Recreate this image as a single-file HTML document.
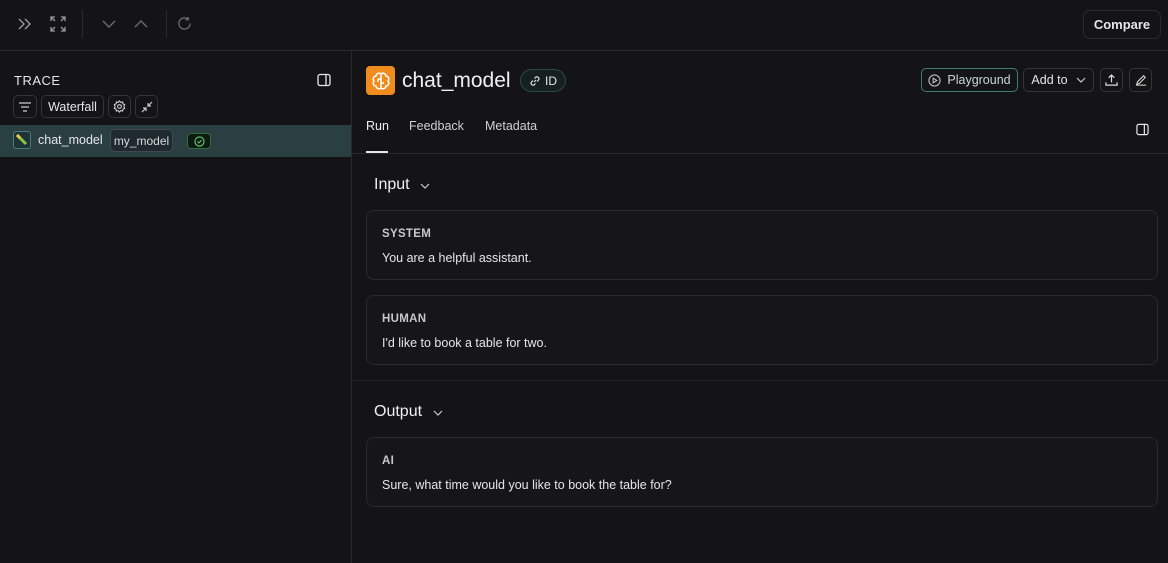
<!DOCTYPE html>
<html><head><style>
*{box-sizing:border-box;margin:0;padding:0}
body{width:1168px;height:563px;background:#141416;font-family:"Liberation Sans",sans-serif;color:#e6e6e8;position:relative;overflow:hidden;font-size:13px}
.abs{position:absolute}
.btn{position:absolute;border:1px solid #34343a;border-radius:5px;display:flex;align-items:center;justify-content:center;color:#e6e6e8}
svg{display:block}
.card{position:absolute;left:366px;width:792px;border:1px solid #2a2a2f;border-radius:8px;background:#161619}
.lbl{position:absolute;left:15px;font-size:11.5px;font-weight:bold;color:#c8c8cc;letter-spacing:.3px}
.txt{position:absolute;left:15px;font-size:12.5px;color:#e6e6e8}
</style></head><body>
<div class="abs" style="left:0;top:50px;width:1168px;height:1px;background:#2a2a2e"></div>
<svg class="abs" style="left:17px;top:16px" width="16" height="16" viewBox="0 0 16 16" fill="none" stroke="#9a9aa0" stroke-width="1.4"><path d="M2 3l5 5-5 5M8 3l5 5-5 5"/></svg>
<svg class="abs" style="left:50px;top:16px" width="16" height="16" viewBox="0 0 16 16" fill="none" stroke="#9a9aa0" stroke-width="1.3"><path d="M1 5V1h4M1 1l4 4M11 1h4v4M15 1l-4 4M1 11v4h4M1 15l4-4M15 11v4h-4M15 15l-4-4"/></svg>
<div class="abs" style="left:82px;top:10px;width:1px;height:28px;background:#2a2a2e"></div>
<svg class="abs" style="left:101px;top:16px" width="16" height="16" viewBox="0 0 16 16" fill="none" stroke="#6a6a70" stroke-width="1.4"><path d="M2 5l6 6 6-6"/></svg>
<svg class="abs" style="left:133px;top:16px" width="16" height="16" viewBox="0 0 16 16" fill="none" stroke="#6a6a70" stroke-width="1.4"><path d="M2 11l6-6 6 6"/></svg>
<div class="abs" style="left:166px;top:10px;width:1px;height:28px;background:#2a2a2e"></div>
<svg class="abs" style="left:177px;top:16px" width="15" height="15" viewBox="0 0 16 16" fill="none" stroke="#6a6a70" stroke-width="1.4"><path d="M14 8a6 6 0 1 1-2-4.5M12 1v3h-3"/></svg>
<div class="btn" style="left:1083px;top:10px;width:78px;height:29px;border-radius:7px;font-weight:bold;font-size:13px;border-color:#2a2a2f">Compare</div>
<div class="abs" style="left:351px;top:51px;width:1px;height:512px;background:#2a2a2e"></div>
<div class="abs" style="left:14px;top:73px;font-size:13px;letter-spacing:.5px">TRACE</div>
<svg class="abs" style="left:317px;top:73px" width="14" height="14" viewBox="0 0 14 14" fill="none" stroke="#e6e6e8" stroke-width="1.3"><rect x="1" y="1.5" width="12" height="11" rx="2"/><path d="M9 1.5v11"/></svg>
<div class="btn" style="left:13px;top:95px;width:24px;height:23px"><svg width="12" height="10" viewBox="0 0 12 10" stroke="#ccc" stroke-width="1.2"><path d="M0 1h12M2 5h8M4 9h4"/></svg></div>
<div class="btn" style="left:41px;top:95px;width:63px;height:23px;font-size:12.5px">Waterfall</div>
<div class="btn" style="left:108px;top:95px;width:23px;height:23px"><svg width="13" height="13" viewBox="0 0 14 14" fill="none" stroke="#ccc" stroke-width="1.2"><circle cx="7" cy="7" r="2"/><path d="M7 1l1.3 1.6 2-.5.4 2 1.9.9-.9 2 .9 2-1.9.9-.4 2-2-.5L7 13l-1.3-1.6-2 .5-.4-2-1.9-.9.9-2-.9-2 1.9-.9.4-2 2 .5z"/></svg></div>
<div class="btn" style="left:135px;top:95px;width:23px;height:23px"><svg width="12" height="12" viewBox="0 0 12 12" fill="none" stroke="#ccc" stroke-width="1.2"><path d="M1 11l4-4M2 7h3v3M11 1L7 5M7 2v3h3"/></svg></div>
<div class="abs" style="left:0;top:125px;width:351px;height:32px;background:#2a3f42"></div>
<div class="abs" style="left:13px;top:131px;width:18px;height:18px;border:1px solid #4a7a78;border-radius:3px;background:#1e3336"><svg width="16" height="16" viewBox="0 0 16 16"><path d="M3 3l9 9" stroke="#8bc34a" stroke-width="3"/><path d="M3 3l3 3" stroke="#f2c744" stroke-width="3"/></svg></div>
<div class="abs" style="left:38px;top:133px;font-size:12.5px">chat_model</div>
<div class="abs" style="left:110px;top:129px;width:63px;height:23px;border:1px solid #44484c;border-radius:5px;background:#1e2a2d;font-size:12px;color:#d8d8dc;display:flex;align-items:center;justify-content:center">my_model</div>
<div class="abs" style="left:187px;top:133px;width:24px;height:16px;border:1px solid #2f6e3c;border-radius:4px;background:#0f1a12;display:flex;align-items:center;justify-content:center"><svg width="11" height="11" viewBox="0 0 12 12" fill="none" stroke="#5fcf7a" stroke-width="1.2"><circle cx="6" cy="6" r="5"/><path d="M3.8 6l1.5 1.5L8.3 4.6"/></svg></div>
<div class="abs" style="left:366px;top:66px;width:29px;height:29px;background:#f08c1e;border-radius:4px;display:flex;align-items:center;justify-content:center"><svg width="20" height="20" viewBox="0 0 20 20" fill="none" stroke="#fff" stroke-width="1.5"><path d="M10 3a3 3 0 0 0-5 2 3 3 0 0 0-2 5 3 3 0 0 0 2 5 3 3 0 0 0 5 2 3 3 0 0 0 5-2 3 3 0 0 0 2-5 3 3 0 0 0-2-5 3 3 0 0 0-5-2zM10 3v14M7 8h3M10 12h3M7 8v3"/></svg></div>
<div class="abs" style="left:402px;top:69px;font-size:21px;color:#f0f0f2">chat_model</div>
<div class="abs" style="left:520px;top:69px;width:46px;height:23px;border:1px solid #2a4a4a;border-radius:12px;background:#15201f;display:flex;align-items:center;justify-content:center;gap:4px;font-size:12px"><svg width="12" height="12" viewBox="0 0 12 12" fill="none" stroke="#ddd" stroke-width="1.2"><path d="M5 7l2-2M4 5.5L2.5 7a2 2 0 0 0 2.8 2.8L6.5 8.5M8 6.5L9.5 5a2 2 0 0 0-2.8-2.8L5.5 3.5"/></svg>ID</div>
<div class="btn" style="left:921px;top:68px;width:97px;height:24px;border-color:#3f7a76;font-size:12.5px;color:#c8d8d6;gap:6px"><svg width="13" height="13" viewBox="0 0 14 14" fill="none" stroke="#bbb" stroke-width="1.2"><circle cx="7" cy="7" r="6"/><path d="M5.5 4.5v5l4-2.5z"/></svg>Playground</div>
<div class="btn" style="left:1023px;top:68px;width:71px;height:24px;font-size:12.5px;gap:8px">Add to<svg width="10" height="6" viewBox="0 0 10 6" fill="none" stroke="#ccc" stroke-width="1.2"><path d="M1 1l4 4 4-4"/></svg></div>
<div class="btn" style="left:1100px;top:68px;width:23px;height:24px"><svg width="13" height="13" viewBox="0 0 14 14" fill="none" stroke="#ddd" stroke-width="1.3"><path d="M7 9V1M4 4l3-3 3 3M1 9v3h12V9"/></svg></div>
<div class="btn" style="left:1129px;top:68px;width:23px;height:24px"><svg width="12" height="12" viewBox="0 0 14 14" fill="none" stroke="#ddd" stroke-width="1.2"><path d="M2 12l1-3 7-7 2 2-7 7zM1 13h12"/></svg></div>
<div class="abs" style="left:366px;top:119px;font-size:12.5px;color:#f0f0f2">Run</div>
<div class="abs" style="left:409px;top:119px;font-size:12.5px;color:#d0d0d4">Feedback</div>
<div class="abs" style="left:485px;top:119px;font-size:12.5px;color:#d0d0d4">Metadata</div>
<svg class="abs" style="left:1136px;top:123px" width="13" height="13" viewBox="0 0 14 14" fill="none" stroke="#e6e6e8" stroke-width="1.3"><rect x="1" y="1.5" width="12" height="11" rx="2"/><path d="M9 1.5v11"/></svg>
<div class="abs" style="left:352px;top:153px;width:816px;height:1px;background:#2a2a2e"></div>
<div class="abs" style="left:366px;top:151px;width:22px;height:2px;background:#e6e6e8"></div>
<div class="abs" style="left:374px;top:176px;font-size:16px;color:#f0f0f2">Input</div>
<svg class="abs" style="left:420px;top:183px" width="10" height="6" viewBox="0 0 10 6" fill="none" stroke="#ccc" stroke-width="1.2"><path d="M1 1l4 4 4-4"/></svg>
<div class="card" style="top:210px;height:70px"><div class="lbl" style="top:17px">SYSTEM</div><div class="txt" style="top:40px">You are a helpful assistant.</div></div>
<div class="card" style="top:295px;height:70px"><div class="lbl" style="top:17px">HUMAN</div><div class="txt" style="top:40px">I'd like to book a table for two.</div></div>
<div class="abs" style="left:352px;top:380px;width:816px;height:1px;background:#222226"></div>
<div class="abs" style="left:374px;top:403px;font-size:16px;color:#f0f0f2">Output</div>
<svg class="abs" style="left:433px;top:410px" width="10" height="6" viewBox="0 0 10 6" fill="none" stroke="#ccc" stroke-width="1.2"><path d="M1 1l4 4 4-4"/></svg>
<div class="card" style="top:437px;height:70px"><div class="lbl" style="top:17px">AI</div><div class="txt" style="top:40px">Sure, what time would you like to book the table for?</div></div>
</body></html>
